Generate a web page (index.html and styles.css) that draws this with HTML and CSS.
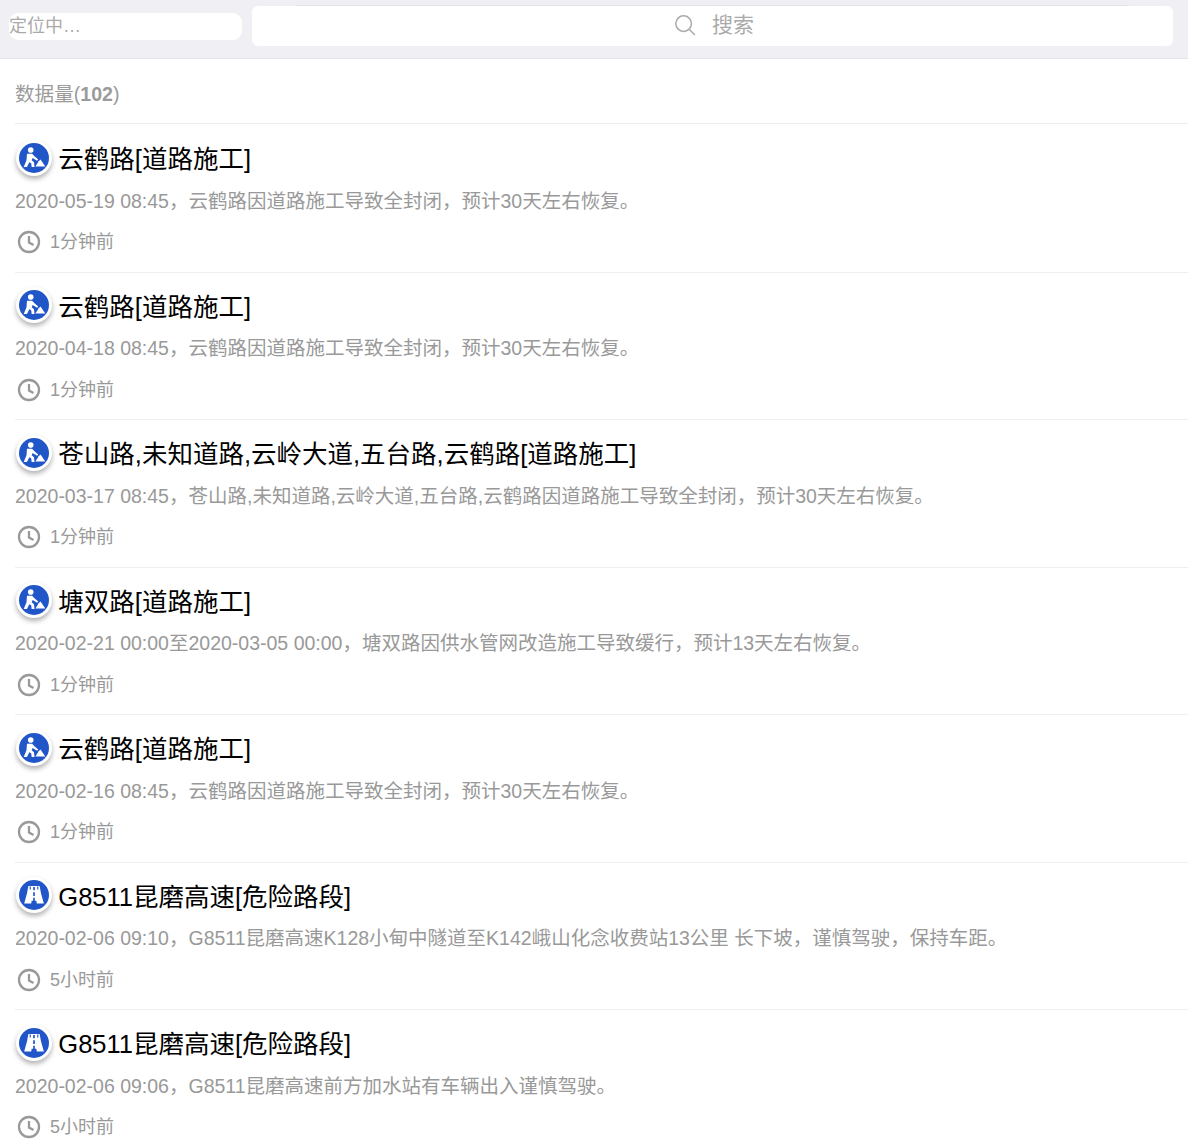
FILE: index.html
```html
<!DOCTYPE html>
<html lang="zh-CN">
<head>
<meta charset="utf-8">
<title>路况</title>
<link rel="stylesheet" href="styles.css">
</head>
<body>
<svg class="defs" width="0" height="0" aria-hidden="true">
  <defs>
    <symbol id="work" viewBox="0 0 32 32">
      <circle cx="16" cy="16" r="16" fill="#2156c9"/>
      <circle cx="12.500" cy="7.500" r="3" fill="#fff"/>
      <path d="M8.500 11.500h5.500l2.500 2.500 4 3.500-1.200 1.500-4.800-3-1 2.500 2.500 2 .5 5h-3l-.5-3.800-2-1.200-2.500 5H5l3-7z" fill="#fff"/>
      <path d="M17.500 25 21 19.500l2-1.800L28 25z" fill="#fff"/>
    </symbol>
    <symbol id="danger" viewBox="0 0 32 32">
      <circle cx="16" cy="16" r="16" fill="#2156c9"/>
      <path d="M10 6.500h12l1.500 8 3 10.500H19l-.5-3h-5l-.5 3H5.500l3-10.500z" fill="#fff"/>
      <path d="M15.100 7.500h1.800v3.500h-1.800zM15.100 13h1.800v4h-1.800zM15.100 19h1.800v5.500h-1.800z" fill="#2156c9"/>
      <path d="M12 7v3M20 7v3" stroke="#2156c9" stroke-width="1.200"/>
    </symbol>
  </defs>
</svg>
<header class="topbar">
  <div class="locate">定位中…</div>
  <div class="search">
    <svg class="search-icon" viewBox="0 0 24 24"><circle cx="10.500" cy="10.500" r="8.500"/><path d="M16.800 16.800l6 6"/></svg>
    <span class="search-text">搜索</span>
  </div>
</header>
<main class="list">
  <div class="count">数据量(<b>102</b>)</div>

  <article class="item">
    <h2 class="title"><span class="badge"><svg><use href="#work"/></svg></span>云鹤路[道路施工]</h2>
    <p class="desc">2020-05-19 08:45，云鹤路因道路施工导致全封闭，预计30天左右恢复。</p>
    <div class="time"><svg class="clock" viewBox="0 0 24 24"><circle cx="12" cy="12" r="10"/><path d="M12 6v6.500l4.500 2.500"/></svg>1分钟前</div>
  </article>

  <article class="item">
    <h2 class="title"><span class="badge"><svg><use href="#work"/></svg></span>云鹤路[道路施工]</h2>
    <p class="desc">2020-04-18 08:45，云鹤路因道路施工导致全封闭，预计30天左右恢复。</p>
    <div class="time"><svg class="clock" viewBox="0 0 24 24"><circle cx="12" cy="12" r="10"/><path d="M12 6v6.500l4.500 2.500"/></svg>1分钟前</div>
  </article>

  <article class="item">
    <h2 class="title"><span class="badge"><svg><use href="#work"/></svg></span>苍山路,未知道路,云岭大道,五台路,云鹤路[道路施工]</h2>
    <p class="desc">2020-03-17 08:45，苍山路,未知道路,云岭大道,五台路,云鹤路因道路施工导致全封闭，预计30天左右恢复。</p>
    <div class="time"><svg class="clock" viewBox="0 0 24 24"><circle cx="12" cy="12" r="10"/><path d="M12 6v6.500l4.500 2.500"/></svg>1分钟前</div>
  </article>

  <article class="item">
    <h2 class="title"><span class="badge"><svg><use href="#work"/></svg></span>塘双路[道路施工]</h2>
    <p class="desc">2020-02-21 00:00至2020-03-05 00:00，塘双路因供水管网改造施工导致缓行，预计13天左右恢复。</p>
    <div class="time"><svg class="clock" viewBox="0 0 24 24"><circle cx="12" cy="12" r="10"/><path d="M12 6v6.500l4.500 2.500"/></svg>1分钟前</div>
  </article>

  <article class="item">
    <h2 class="title"><span class="badge"><svg><use href="#work"/></svg></span>云鹤路[道路施工]</h2>
    <p class="desc">2020-02-16 08:45，云鹤路因道路施工导致全封闭，预计30天左右恢复。</p>
    <div class="time"><svg class="clock" viewBox="0 0 24 24"><circle cx="12" cy="12" r="10"/><path d="M12 6v6.500l4.500 2.500"/></svg>1分钟前</div>
  </article>

  <article class="item">
    <h2 class="title"><span class="badge"><svg><use href="#danger"/></svg></span>G8511昆磨高速[危险路段]</h2>
    <p class="desc">2020-02-06 09:10，G8511昆磨高速K128小甸中隧道至K142峨山化念收费站13公里 长下坡，谨慎驾驶，保持车距。</p>
    <div class="time"><svg class="clock" viewBox="0 0 24 24"><circle cx="12" cy="12" r="10"/><path d="M12 6v6.500l4.500 2.500"/></svg>5小时前</div>
  </article>

  <article class="item">
    <h2 class="title"><span class="badge"><svg><use href="#danger"/></svg></span>G8511昆磨高速[危险路段]</h2>
    <p class="desc">2020-02-06 09:06，G8511昆磨高速前方加水站有车辆出入谨慎驾驶。</p>
    <div class="time"><svg class="clock" viewBox="0 0 24 24"><circle cx="12" cy="12" r="10"/><path d="M12 6v6.500l4.500 2.500"/></svg>5小时前</div>
  </article>
</main>
</body>
</html>
```
FILE: styles.css
```css
* { box-sizing: border-box; }
html, body { margin: 0; padding: 0; }
body {
  background: #fff;
  font-family: "Liberation Sans", "Noto Sans CJK SC", sans-serif;
  overflow: hidden;
  height: 1140px;
}
.defs { position: absolute; }
.topbar {
  height: 59px;
  background: #efeff4;
  border-bottom: 1px solid #e4e4e8;
  display: flex;
  align-items: flex-start;
  gap: 10px;
  padding: 0 15px 0 9px;
}
.locate {
  width: 233px;
  height: 27.500px;
  margin-top: 12.500px;
  background: #fff;
  border-radius: 9px;
  color: #aaa;
  font-size: 18px;
  line-height: 27px;
}
.search {
  position: relative;
  flex: 1;
  height: 40.500px;
  margin-top: 5.500px;
  padding-left: 3px;
  background: #fff;
  border-radius: 6px;
  display: flex;
  align-items: center;
  justify-content: center;
  gap: 16px;
  color: #aaa;
  font-size: 21px;
}
.search::before {
  content: "";
  position: absolute;
  top: -1px;
  left: 44px;
  right: 44px;
  height: 1px;
  background: #e2e2e6;
}
.search-text { margin-bottom: 6px; }
.search-icon {
  width: 22px;
  height: 22px;
  margin-bottom: 1px;
  fill: none;
  stroke: #aaa;
  stroke-width: 1.600;
}
.list { padding-left: 15px; }
.count {
  height: 65px;
  margin-bottom: 1px;
  padding-top: 20.500px;
  border-bottom: 1px solid #ececec;
  color: #9b9b9b;
  font-size: 19.600px;
  line-height: 28px;
}
.item {
  height: 147.500px;
  border-bottom: 1px solid #efefef;
  padding-top: 16.400px;
}
.title {
  margin: 0;
  display: flex;
  align-items: center;
  gap: 8.300px;
  font-size: 25.500px;
  font-weight: 400;
  line-height: 36px;
  color: #000;
}
.badge {
  width: 36px;
  height: 36px;
  padding: 3px;
  border-radius: 50%;
  background: #fff;
  box-shadow: 0 3px 5px rgba(0, 0, 0, .3);
  flex: none;
  margin-left: 1px;
  margin-top: -3px;
  margin-right: -2px;
}
.badge svg { display: block; width: 30px; height: 30px; }
.desc {
  margin: 8.200px 0 0;
  color: #999;
  font-size: 19.500px;
  line-height: 30px;
}
.time {
  margin-top: 11.600px;
  display: flex;
  align-items: center;
  gap: 9px;
  color: #999;
  font-size: 18px;
  line-height: 30px;
  padding-left: 2px;
}
.clock {
  width: 24px;
  height: 24px;
  fill: none;
  stroke: #999;
  stroke-width: 2.300;
}
```
